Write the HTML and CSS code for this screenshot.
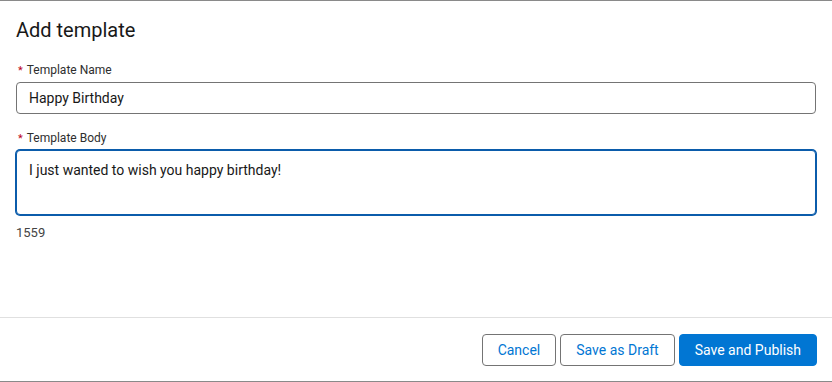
FILE: index.html
```html
<!DOCTYPE html>
<html>
<head>
  <title>Add template</title>
  <meta name="viewport" content="width=device-width, initial-scale=1.0">
  <link rel="stylesheet" href="styles.css">
</head>
<body>
  <div class="modal">
    <div class="modal-header">
      <h2>Add template</h2>
    </div>
    <div class="modal-body">
      <div class="field">
        <label class="field-label"><abbr class="required">*</abbr>Template Name</label>
        <input class="field-input" type="text" value="Happy Birthday">
      </div>
      <div class="field">
        <label class="field-label"><abbr class="required">*</abbr>Template Body</label>
        <textarea class="field-textarea">I just wanted to wish you happy birthday!</textarea>
        <div class="char-count">1559</div>
      </div>
    </div>
    <div class="modal-footer">
      <button class="btn btn-neutral">Cancel</button>
      <button class="btn btn-neutral">Save as Draft</button>
      <button class="btn btn-brand">Save and Publish</button>
    </div>
  </div>
</body>
</html>
```

FILE: styles.css
```css
body {
  margin: 0;
  background-color: #fff;
  font-family: Roboto, "Liberation Sans", sans-serif;
  color: #181818;
}

.modal {
  height: 380px;
  border-top: 1px solid #8a8a8a;
  border-bottom: 1px solid #8a8a8a;
  display: flex;
  flex-direction: column;
}

.modal-header {
  padding: 17px 16px 0;
}

.modal-header h2 {
  margin: 0;
  font-size: 20px;
  font-weight: 400;
  line-height: 25px;
}

.modal-body {
  flex: 1;
  padding: 0 16px;
}

.field {
  margin-top: 18px;
}

.field + .field {
  margin-top: 15px;
}

.field-label {
  display: block;
  font-size: 12px;
  line-height: 18px;
  color: #2e2e2e;
  margin-bottom: 2px;
}

.required {
  color: #ba0517;
  text-decoration: none;
  margin: 0 4px 0 2px;
  font-size: 11px;
}

.field-input {
  box-sizing: border-box;
  width: 100%;
  height: 32px;
  border: 1px solid #747474;
  border-radius: 4px;
  padding: 0 12px;
  font-family: inherit;
  font-size: 14px;
  color: #181818;
  outline: none;
}

.field-textarea {
  display: block;
  box-sizing: border-box;
  width: 100%;
  height: 65px;
  border: 1px solid #0b5cab;
  box-shadow: 0 0 0 1px #0b5cab;
  border-radius: 4px;
  padding: 7px 12px;
  font-family: inherit;
  font-size: 14px;
  line-height: 24px;
  color: #181818;
  resize: none;
  outline: none;
}

.char-count {
  margin-top: 9px;
  font-size: 13px;
  line-height: 18px;
  color: #444;
}

.modal-footer {
  border-top: 1px solid #e0e0e0;
  padding: 16px 15px 15px;
  display: flex;
  justify-content: flex-end;
  gap: 4px;
}

.btn {
  height: 32px;
  padding: 0 15px;
  border-radius: 4px;
  font-family: inherit;
  font-size: 14px;
  cursor: pointer;
}

.btn-neutral {
  background-color: #fff;
  border: 1px solid #747474;
  color: #0176d3;
}

.btn-brand {
  background-color: #0176d3;
  border: 1px solid #0176d3;
  color: #fff;
}
```
